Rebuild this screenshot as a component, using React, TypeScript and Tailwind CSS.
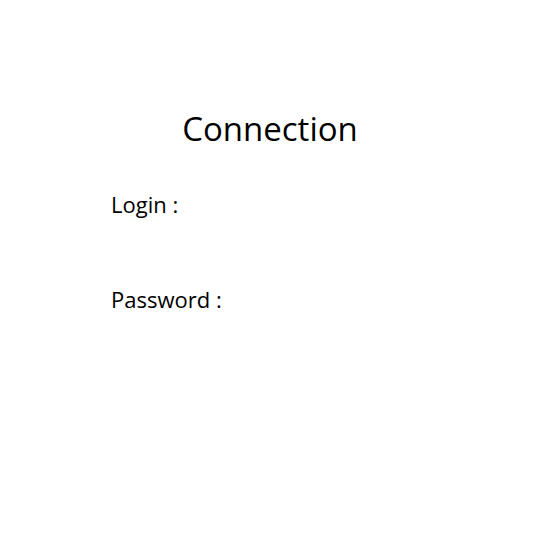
export default function App() {
  return (
    <div className="h-[550px] w-[540px] bg-white text-black" style={{ fontFamily: '"Open Sans", "Noto Sans", sans-serif' }}>
      <div className="pt-[106px] text-center text-[33px] leading-[45px]">Connection</div>
      <div className="ml-[111px] mt-[38px] flex flex-col gap-[65px] text-[22px] leading-[30px]">
        <div>Login :</div>
        <div>Password :</div>
      </div>
    </div>
  );
}
